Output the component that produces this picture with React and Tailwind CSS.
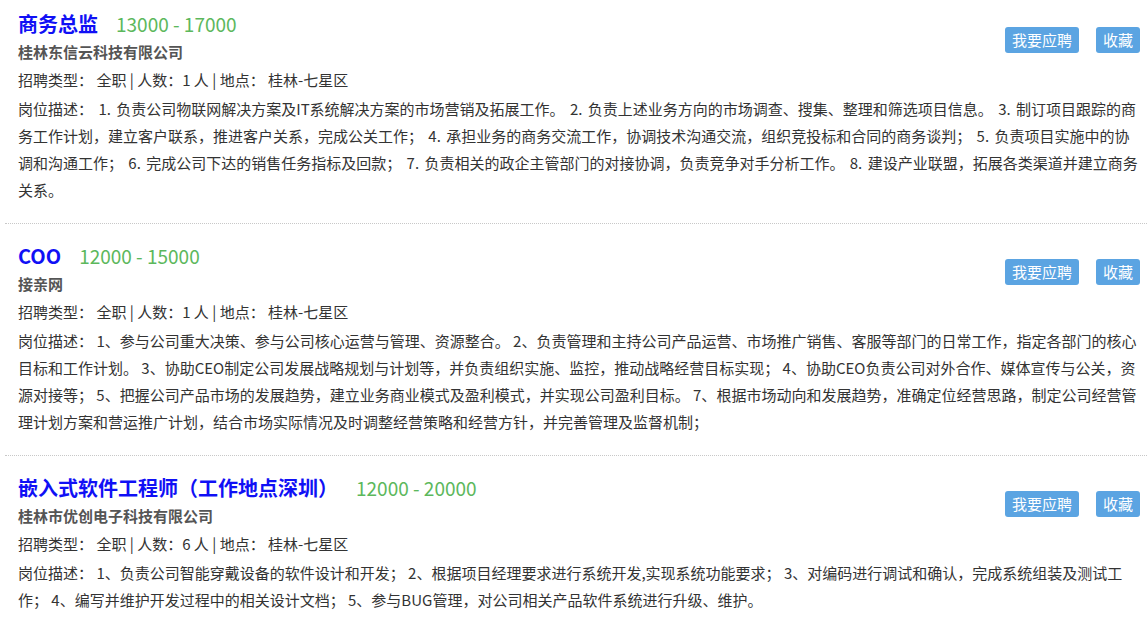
import React from 'react';

const jobs = [
  {
    id: 1,
    title: '商务总监',
    salary: '13000 - 17000',
    company: '桂林东信云科技有限公司',
    type: '全职',
    count: 1,
    location: '桂林-七星区',
    spacing: '[word-spacing:2px]',
    desc: '1. 负责公司物联网解决方案及IT系统解决方案的市场营销及拓展工作。 2. 负责上述业务方向的市场调查、搜集、整理和筛选项目信息。 3. 制订项目跟踪的商务工作计划，建立客户联系，推进客户关系，完成公关工作； 4. 承担业务的商务交流工作，协调技术沟通交流，组织竞投标和合同的商务谈判； 5. 负责项目实施中的协调和沟通工作； 6. 完成公司下达的销售任务指标及回款； 7. 负责相关的政企主管部门的对接协调，负责竞争对手分析工作。 8. 建设产业联盟，拓展各类渠道并建立商务关系。',
  },
  {
    id: 2,
    title: 'COO',
    salary: '12000 - 15000',
    company: '接亲网',
    type: '全职',
    count: 1,
    location: '桂林-七星区',
    spacing: '',
    desc: '1、参与公司重大决策、参与公司核心运营与管理、资源整合。 2、负责管理和主持公司产品运营、市场推广销售、客服等部门的日常工作，指定各部门的核心目标和工作计划。 3、协助CEO制定公司发展战略规划与计划等，并负责组织实施、监控，推动战略经营目标实现； 4、协助CEO负责公司对外合作、媒体宣传与公关，资源对接等； 5、把握公司产品市场的发展趋势，建立业务商业模式及盈利模式，并实现公司盈利目标。 7、根据市场动向和发展趋势，准确定位经营思路，制定公司经营管理计划方案和营运推广计划，结合市场实际情况及时调整经营策略和经营方针，并完善管理及监督机制；',
  },
  {
    id: 3,
    title: '嵌入式软件工程师（工作地点深圳）',
    salary: '12000 - 20000',
    company: '桂林市优创电子科技有限公司',
    type: '全职',
    count: 6,
    location: '桂林-七星区',
    spacing: '',
    desc: '1、负责公司智能穿戴设备的软件设计和开发； 2、根据项目经理要求进行系统开发,实现系统功能要求； 3、对编码进行调试和确认，完成系统组装及测试工作； 4、编写并维护开发过程中的相关设计文档； 5、参与BUG管理，对公司相关产品软件系统进行升级、维护。',
  },
];

const JobItem = ({ job, first }) => (
  <div
    className={`ml-[5px] pl-[13px] pr-[7px] pb-[20px] border-b border-dotted border-[#c8c8c8] ${
      first ? 'pt-[10px]' : 'pt-[18px]'
    }`}
  >
    {/* 标题 + 按钮 */}
    <div className="flex items-start">
      <div className="flex-1">
        <div className="flex items-baseline h-[28px] leading-[28px]">
          <span className="text-[20px] font-bold text-[#1010f5]">{job.title}</span>
          <span className="ml-[18px] text-[19px] text-[#5cb85c]">{job.salary}</span>
        </div>
        <p className="text-[15px] leading-[28px] font-bold text-[#555]">{job.company}</p>
        <p className="text-[15px] leading-[28px] text-[#333]">
          招聘类型： {job.type} | 人数：{job.count} 人 | 地点： {job.location}
        </p>
      </div>
      <div className="flex gap-[17px] mt-[17px]">
        <button className="h-[26px] px-[7px] rounded-[3px] bg-[#5ba4e2] text-white text-[15px] leading-[26px]">
          我要应聘
        </button>
        <button className="h-[26px] px-[7px] rounded-[3px] bg-[#5ba4e2] text-white text-[15px] leading-[26px]">
          收藏
        </button>
      </div>
    </div>
    {/* 岗位描述 */}
    <p className={`mt-[1px] text-[15px] leading-[27px] text-[#333] ${job.spacing}`}>
      岗位描述： {job.desc}
    </p>
  </div>
);

export default function App() {
  return (
    <div
      className="w-full bg-white"
      style={{ fontFamily: '"Noto Sans CJK SC", "Noto Sans", sans-serif' }}
    >
      {jobs.map((job, i) => (
        <JobItem key={job.id} job={job} first={i === 0} />
      ))}
    </div>
  );
}
